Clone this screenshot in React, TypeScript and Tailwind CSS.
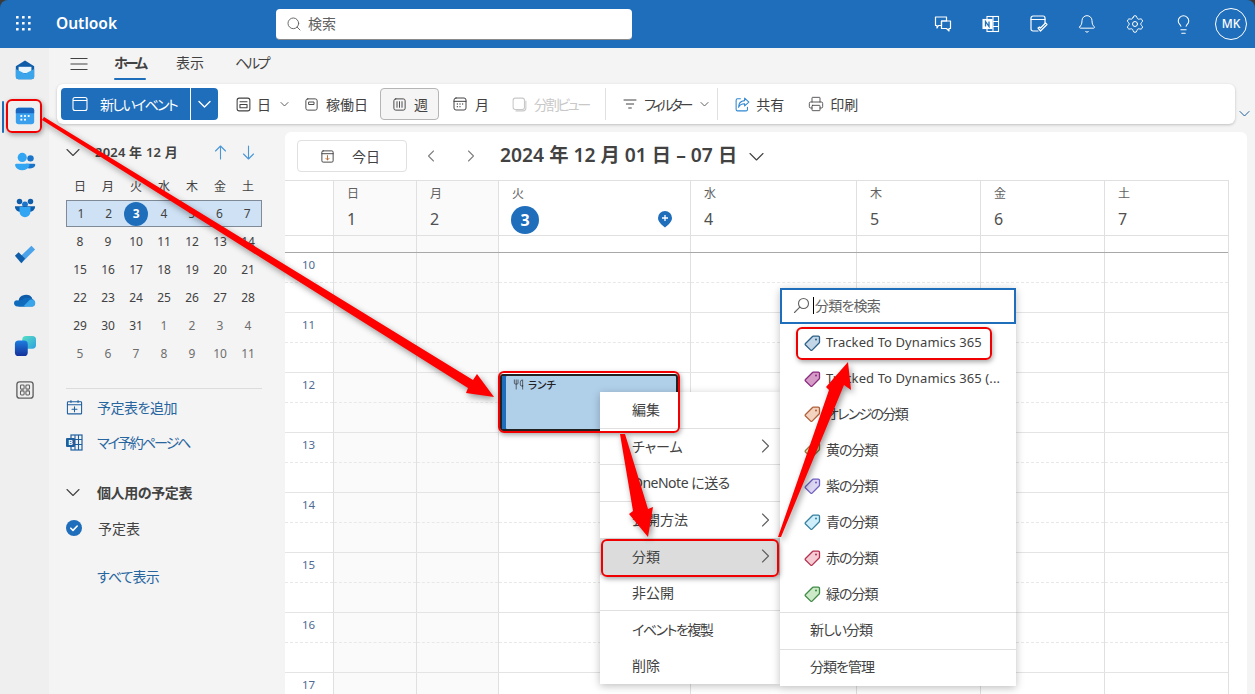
import React from "react";
import { Search, Bell, Settings, Lightbulb, Printer, Utensils } from "lucide-react";

const S = ({ children, size = 16, className = "", fill = "none" }: { children: React.ReactNode; size?: number; className?: string; fill?: string }) => (
  <svg width={size} height={size} viewBox="0 0 24 24" fill={fill} stroke="currentColor" strokeWidth={1.5} strokeLinecap="round" strokeLinejoin="round" className={"shrink-0 " + className}>
    {children}
  </svg>
);

const ChevD = ({ w = 14, sw = 1.1, className = "" }: { w?: number; sw?: number; className?: string }) => (
  <svg width={w} height={w / 2 + 2} viewBox={`0 0 ${w} ${w / 2 + 2}`} fill="none" stroke="currentColor" strokeWidth={sw} strokeLinecap="round" strokeLinejoin="round" className={"shrink-0 " + className}>
    <path d={`M1 1.500 ${w / 2} ${w / 2 + 0.5} ${w - 1} 1.500`} />
  </svg>
);

const ChevH = ({ dir, h = 14, className = "" }: { dir: "l" | "r"; h?: number; className?: string }) => (
  <svg width={h / 2 + 2} height={h} viewBox={`0 0 ${h / 2 + 2} ${h}`} fill="none" stroke="currentColor" strokeWidth="1.100" strokeLinecap="round" strokeLinejoin="round" className={"shrink-0 " + className}>
    <path d={dir === "r" ? `M1.500 1 ${h / 2 + 0.5} ${h / 2} 1.500 ${h - 1}` : `M${h / 2 + 0.5} 1 1.500 ${h / 2} ${h / 2 + 0.5} ${h - 1}`} />
  </svg>
);

const RailIcons = [
  <svg key="o" width="22" height="22" viewBox="0 0 24 24">
    <path d="M12 1.500 22 8v11a3 3 0 0 1-3 3H5a3 3 0 0 1-3-3V8z" fill="#0f5ca8" />
    <path d="M5 8.500h14v7H5z" fill="#eaf5fc" />
    <path d="M2 11l10 5 10-5v8a3 3 0 0 1-3 3H5a3 3 0 0 1-3-3z" fill="#3ba5ec" />
  </svg>,
  <svg key="c" width="22" height="22" viewBox="0 0 24 24">
    <rect x="2" y="3" width="20" height="18" rx="3" fill="#3aa0ee" />
    <path d="M2 9V6a3 3 0 0 1 3-3h14a3 3 0 0 1 3 3v3z" fill="#1a67c1" />
    <g fill="#fff"><rect x="7" y="11" width="2" height="2" /><rect x="11" y="11" width="2" height="2" /><rect x="15" y="11" width="2" height="2" /><rect x="7" y="15" width="2" height="2" /><rect x="11" y="15" width="2" height="2" /></g>
  </svg>,
  <svg key="p" width="22" height="22" viewBox="0 0 24 24">
    <circle cx="18" cy="8" r="3.500" fill="#1a74c9" />
    <path d="M13 14h9c1 0 1.500.8 1 2-1 2-3 3-6 3s-4-1-5-3z" fill="#1a74c9" />
    <circle cx="9" cy="7" r="5" fill="#33a6f3" />
    <path d="M2.500 14h13c1 0 1.700 1 1.200 2-1 3-4 5-7.700 5S2.200 19 1.300 16c-.3-1 .2-2 1.200-2z" fill="#33a6f3" />
  </svg>,
  <svg key="t" width="22" height="22" viewBox="0 0 24 24">
    <circle cx="6" cy="5" r="3" fill="#0f5ca8" />
    <circle cx="18" cy="5" r="3" fill="#0f5ca8" />
    <circle cx="12" cy="8" r="3.200" fill="#1a74c9" />
    <path d="M1 10h22c0 4-3 6-6 6H7c-3 0-6-2-6-6z" fill="#0f5ca8" />
    <path d="M6 11h12v5a6 6 0 0 1-12 0z" fill="#33a6f3" />
  </svg>,
  <svg key="d" width="22" height="22" viewBox="0 0 24 24">
    <path d="M8 13.500 19 3l4 4-15 15z" fill="#4ba3ea" />
    <path d="M1 14l4-4 7 7-4 5z" fill="#0f5ca8" />
  </svg>,
  <svg key="od" width="22" height="22" viewBox="0 0 24 24">
    <path d="M5 13a8 7 0 0 1 15-3l-8 9H5z" fill="#0f5ca8" />
    <path d="M9 12a5 5 0 0 1 6-2c1-.3 5-.3 7 2.500 2 3 .5 6.500-2 6.500H4c-3 0-4-2-4-3.500C0 13.500 2 12 4 12.500z" fill="#0f6cbd" />
    <path d="M10 19l7-7c2-1 4-.5 5.500 1 1.500 2.500 .5 6-2.500 6z" fill="#3ba5ec" />
  </svg>,
  <svg key="cp" width="22" height="22" viewBox="0 0 24 24">
    <defs>
      <linearGradient id="cpa" x1="0" y1="0" x2="1" y2="1"><stop offset="0" stopColor="#57e0c4" /><stop offset="1" stopColor="#2f9fe0" /></linearGradient>
      <linearGradient id="cpb" x1="0" y1="0" x2="0" y2="1"><stop offset="0" stopColor="#1d7ee0" /><stop offset="1" stopColor="#14309a" /></linearGradient>
    </defs>
    <rect x="9" y="1" width="15" height="14" rx="4" fill="url(#cpa)" />
    <rect x="1" y="6" width="14" height="17" rx="4" fill="url(#cpb)" />
  </svg>,
  <svg key="a" width="18" height="18" viewBox="0 0 20 20" fill="none" stroke="#616161" strokeWidth="1.200" className="-mt-[4px]">
    <rect x="1" y="1" width="18" height="18" rx="3" strokeWidth="1.500" />
    <rect x="5" y="4.500" width="4" height="4.500" rx="1" /><rect x="11" y="4.500" width="4" height="4.500" rx="1" />
    <rect x="5" y="11" width="4" height="4.500" rx="1" /><rect x="11" y="11" width="4" height="4.500" rx="1" />
  </svg>,
];

const Tag = ({ stroke, fill }: { stroke: string; fill: string }) => (
  <svg width="17" height="17" viewBox="0 0 17 17" className="shrink-0">
    <path d="M1.500 9.500 8.500 2.500a1 1 0 0 1 .8-.4h5a1.200 1.200 0 0 1 1.200 1.200v5a1 1 0 0 1-.4.8l-7 7a1 1 0 0 1-1.400 0L1.500 11a1 1 0 0 1 0-1.500z" fill={fill} stroke={stroke} strokeWidth="1.300" />
    <circle cx="12" cy="5.500" r="1" fill={stroke} />
  </svg>
);

const RibbonItem = ({ icon, label, className = "", labelClass = "", chevron }: { icon: React.ReactNode; label: string; className?: string; labelClass?: string; chevron?: boolean }) => (
  <div className={"flex h-8 shrink-0 items-center whitespace-nowrap text-[14px] " + className}>
    {icon}
    <span className={labelClass}>{label}</span>
    {chevron && <ChevD w={9} sw={1} className="ml-[4px] text-[#616161]" />}
  </div>
);

const weeks: [string, boolean][][] = [
  [["1", false], ["2", false], ["3", false], ["4", false], ["5", false], ["6", false], ["7", false]],
  [["8", false], ["9", false], ["10", false], ["11", false], ["12", false], ["13", false], ["14", false]],
  [["15", false], ["16", false], ["17", false], ["18", false], ["19", false], ["20", false], ["21", false]],
  [["22", false], ["23", false], ["24", false], ["25", false], ["26", false], ["27", false], ["28", false]],
  [["29", false], ["30", false], ["31", false], ["1", true], ["2", true], ["3", true], ["4", true]],
  [["5", true], ["6", true], ["7", true], ["8", true], ["9", true], ["10", true], ["11", true]],
];
const dayNames = ["日", "月", "火", "水", "木", "金", "土"];
const colTemplate = "grid grid-cols-[48px_83px_82px_192px_166px_124px_124px_124px]";

const Outline = ({ className }: { className: string }) => (
  <div className={"pointer-events-none absolute rounded-md border-2 border-[#f00000] shadow-[1px_2px_5px_rgba(0,0,0,0.35)] " + className} />
);

const menuItems: { t: string; chev?: boolean; line?: boolean; sel?: boolean; cls?: string }[] = [
  { t: "編集", line: true },
  { t: "チャーム", chev: true, line: true },
  { t: "OneNote に送る", line: true, cls: "tracking-[-0.5px]" },
  { t: "公開方法", chev: true },
  { t: "分類", chev: true, sel: true },
  { t: "非公開", line: true },
  { t: "イベントを複製", cls: "tracking-[-1.500px]" },
  { t: "削除" },
];

const cats: [string, string, string, string, string][] = [
  ["Tracked To Dynamics 365", "#2b5f86", "#c2d6e8", "text-[13px] tracking-[0.1px]", "pt-[1px]"],
  ["Tracked To Dynamics 365 (...", "#8a2a7d", "#d69cc8", "text-[13px] tracking-[0.1px]", "pt-[1px]"],
  ["オレンジの分類", "#b0603a", "#f3d3c0", "tracking-[-1.700px]", "pb-[2px]"],
  ["黄の分類", "#8f7a3c", "#f6ecc0", "tracking-[-1px]", "pb-[2px]"],
  ["紫の分類", "#6f5fc0", "#dcd6f3", "tracking-[-1px]", "pb-[2px]"],
  ["青の分類", "#357f9e", "#cdeefa", "tracking-[-1px]", "pb-[2px]"],
  ["赤の分類", "#b5304f", "#f6ccd4", "tracking-[-1px]", "pb-[2px]"],
  ["緑の分類", "#3f8a45", "#cdeac8", "tracking-[-1px]", "pb-[2px]"],
];

export default function App() {
  return (
    <div className="relative flex h-[694px] w-[1255px] flex-col overflow-hidden bg-[#3a3a3a] text-[#424242] [font-family:'Noto_Sans','Noto_Sans_CJK_JP',sans-serif] [font-feature-settings:'palt']">
      {/* Header */}
      <header className="flex h-12 shrink-0 items-center rounded-t-[8px] bg-[#1f6ebb] text-white">
        <div className="flex w-12 justify-center">
          <svg width="16" height="16" viewBox="0 0 16 16" fill="#fff">
            {[1, 7, 13].flatMap((y) => [1, 7, 13].map((x) => <rect key={x + "-" + y} x={x - 1} y={y - 1} width="2.600" height="2.600" rx=".5" />))}
          </svg>
        </div>
        <span className="ml-[8px] w-[220px] text-[15.500px] font-semibold">Outlook</span>
        <div className="flex h-[31px] w-[356px] items-center gap-[6px] rounded-[4px] border-b border-[#8a8a8a] bg-white pl-[10px] text-[14px] text-[#616161]">
          <Search size={16} strokeWidth={1.4} />
          <span>検索</span>
        </div>
        <div className="ml-auto flex items-center">
          <div className="flex w-12 justify-center">
            <svg width="18" height="18" viewBox="0 0 18 18" fill="none" stroke="#fff" strokeWidth="1.200" strokeLinejoin="round">
              <path d="M1.500 2h11v4H7.500v4.500H4.500L3 13V10.500H1.500z" />
              <path d="M7.500 6h9v7.500h-1.500V16l-2.500-2.500h-5z" />
            </svg>
          </div>
          <div className="flex w-12 justify-center">
            <svg width="18" height="18" viewBox="0 0 18 18" fill="none" stroke="#fff" strokeWidth="1.100">
              <rect x="5" y="1.500" width="11.500" height="15" />
              <path d="M11 1.500v15M11 6.500h5.500M11 11.500h5.500" />
              <rect x="1" y="4.500" width="9" height="9" fill="#fff" />
              <path d="M3.500 11.500v-5l3.500 5v-5" stroke="#1f6ebb" strokeWidth="1.300" />
            </svg>
          </div>
          <div className="flex w-12 justify-center">
            <svg width="18" height="18" viewBox="0 0 18 18" fill="none" stroke="#fff" strokeWidth="1.200" strokeLinecap="round" strokeLinejoin="round">
              <path d="M8 16H3a2 2 0 0 1-2-2V3a2 2 0 0 1 2-2h10a2 2 0 0 1 2 2v5" />
              <path d="M1 4.500h14" />
              <path d="M8 13l2.500 3 6.500-6.500-1.500-1.500-5 5-1-1z" />
            </svg>
          </div>
          <div className="flex w-12 justify-center"><Bell size={20} strokeWidth={1.2} /></div>
          <div className="flex w-12 justify-center"><Settings size={20} strokeWidth={1.2} /></div>
          <div className="flex w-12 justify-center"><Lightbulb size={21} strokeWidth={1.2} /></div>
          <div className="flex w-12 justify-center">
            <div className="flex h-8 w-8 items-center justify-center rounded-full border border-white text-[12px] font-medium">MK</div>
          </div>
        </div>
      </header>

      <div className="flex min-h-0 flex-1 bg-[#f4f4f4]">
        {/* Rail */}
        <nav className="relative flex w-[49px] shrink-0 flex-col items-center gap-[24px] bg-[#efefef] pt-[11px]">
          {RailIcons.map((ic, i) => (
            <div key={i} className="flex h-[22px] items-center justify-center">{ic}</div>
          ))}
          <div className="absolute left-[2px] top-[53px] h-8 w-[2px] rounded bg-[#1f6ebb]" />
        </nav>

        {/* Main */}
        <div className="flex min-w-0 flex-1 flex-col">
          {/* Tabs */}
          <div className="flex h-9 shrink-0 items-start pt-[2px] text-[14px]">
            <div className="ml-[21px] flex h-7 w-[18px] items-center justify-center text-[#424242]">
              <svg width="18" height="14" viewBox="0 0 18 14" stroke="currentColor" strokeWidth="1.200"><path d="M0.500 1.500h17M0.500 7h17M0.500 12.500h17" /></svg>
            </div>
            <div className="ml-[26px] flex h-[30px] w-[32px] flex-col items-start justify-between pt-[3px]">
              <span className="whitespace-nowrap font-semibold leading-5 tracking-[-3px]">ホーム</span>
              <span className="h-[2.500px] w-full rounded bg-[#1f6ebb]" />
            </div>
            <span className="ml-[30px] pt-[3px] leading-5">表示</span>
            <span className="ml-[31px] pt-[3px] leading-5 tracking-[-2.300px]">ヘルプ</span>
          </div>

          {/* Ribbon */}
          <div className="flex h-10 shrink-0 items-end">
            <div className="ml-2 flex h-10 w-[1178px] items-center rounded-md bg-white pl-1 shadow-[0_1px_3px_rgba(0,0,0,0.22)]">
              <div className="flex h-8 w-[157px] shrink-0 overflow-hidden rounded bg-[#1f6ebb] text-white">
                <div className="flex w-[130px] items-center gap-[12px] border-r border-white pl-[11px] text-[14px]">
                  <svg width="16" height="16" viewBox="0 0 16 16" fill="none" stroke="#fff" strokeWidth="1.100"><rect x="1" y="1.500" width="14" height="13" rx="2" /><path d="M1 4.500h14" /></svg>
                  <span className="whitespace-nowrap tracking-[-1.700px]">新しいイベント</span>
                </div>
                <div className="flex flex-1 items-center justify-center"><ChevD w={13} sw={1.4} /></div>
              </div>
              <RibbonItem className="ml-[17px] gap-[5px]" label="日" chevron icon={<S size={17}><rect x="3" y="3" width="18" height="18" rx="3" /><path d="M7 8h10M7 12h10v4.500H7z" /></S>} />
              <RibbonItem className="ml-[15px] gap-[7px]" label="稼働日" icon={<S size={15}><rect x="3" y="3" width="18" height="18" rx="3" /><path d="M8 8h8v4H8z" /></S>} />
              <RibbonItem className="ml-[12px] w-[59px] gap-[7px] rounded border border-[#b5b5b5] bg-[#f5f5f5] pl-[11px]" label="週" icon={<S size={15}><rect x="3" y="3" width="18" height="18" rx="3" /><path d="M8 7.500v9M12 7.500v9M16 7.500v9" /></S>} />
              <RibbonItem className="ml-[13px] gap-[7px]" label="月" icon={<S size={16}><rect x="3" y="3" width="18" height="18" rx="3" /><path d="M3 8h18" /><path d="M8 12h.01M12 12h.01M16 12h.01M8 16h.01M12 16h.01" strokeWidth="2" /></S>} />
              <RibbonItem className="ml-[22px] gap-[6px] text-[#c8c8c8]" labelClass="tracking-[-2.300px]" label="分割ビュー" icon={<S size={17}><rect x="3" y="3" width="16" height="16" rx="3" /><path d="M21 7v10a4 4 0 0 1-4 4H7" /></S>} />
              <div className="ml-[16px] h-8 w-px shrink-0 bg-[#e0e0e0]" />
              <RibbonItem className="ml-[16px] gap-[6px]" labelClass="tracking-[-3px]" label="フィルター" chevron icon={<S size={16}><path d="M3 6h18M6.500 12h11M10 18h4" /></S>} />
              <div className="ml-[8px] h-8 w-px shrink-0 bg-[#e0e0e0]" />
              <RibbonItem className="ml-[16px] gap-[5px]" label="共有" icon={<S size={17} className="text-[#2f86d0]"><path d="M9 4H5a2 2 0 0 0-2 2v13a2 2 0 0 0 2 2h12a2 2 0 0 0 2-2v-3" /><path d="M15 3l6 5.500-6 5.500v-3c-4 0-7 1.500-8.500 5 0-5.500 3-9 8.500-9.500z" /></S>} />
              <RibbonItem className="ml-[24px] gap-[6px]" label="印刷" icon={<Printer size={16} strokeWidth={1.3} />} />
            </div>
            <ChevD w={11} sw={1} className="mb-[7px] ml-[4px] text-[#1f5f9e]" />
          </div>

          {/* Content */}
          <div className="mt-2 flex min-h-0 flex-1">
            {/* Sidebar */}
            <aside className="w-[236px] shrink-0 pl-[17px]">
              <div className="flex h-[41px] w-[196px] items-center text-[13px]">
                <ChevD w={14} />
                <span className="ml-[15px] font-semibold tracking-[0.2px]">2024 年 12 月</span>
                <svg width="15" height="15" viewBox="0 0 15 15" fill="none" stroke="#4a97d8" strokeWidth="1.100" strokeLinecap="round" strokeLinejoin="round" className="ml-auto mr-[13px]"><path d="M7.500 14V1M2.500 6l5-5 5 5" /></svg>
                <svg width="15" height="15" viewBox="0 0 15 15" fill="none" stroke="#4a97d8" strokeWidth="1.100" strokeLinecap="round" strokeLinejoin="round" className="mr-[6px]"><path d="M7.500 1v13M2.500 9l5 5 5-5" /></svg>
              </div>
              <div className="grid w-[196px] grid-cols-7 text-center text-[12px]">
                {dayNames.map((d) => (
                  <div key={d} className="flex h-[27px] items-center justify-center">{d}</div>
                ))}
              </div>
              <div className="w-[196px] text-[12px]">
                {weeks.map((w, i) => (
                  <div key={i} className={"grid grid-cols-7 " + (i === 0 ? "mb-px h-[27px] border border-[#7f8a96] bg-[#cfe2f5]" : "h-7")}>
                    {w.map(([d, other], j) => (
                      <div key={j} className={"flex items-center justify-center " + (other ? "text-[#6e6e6e]" : "")}>
                        {i === 0 && d === "3" ? (
                          <span className="flex h-6 w-6 items-center justify-center rounded-full bg-[#1f6ebb] font-bold text-white">3</span>
                        ) : (
                          d
                        )}
                      </div>
                    ))}
                  </div>
                ))}
              </div>
              <div className="mt-[20px] h-px w-[196px] bg-[#dcdcdc]" />
              <div className="flex h-9 items-center text-[14px] text-[#27659f]">
                <S size={17} className="text-[#1f5f9e]"><rect x="2" y="4" width="20" height="17" rx="1" /><path d="M2 8h20M7 2v3M17 2v3M12 11v7M8.500 14.500h7" /></S>
                <span className="ml-[14px] tracking-[-0.500px]">予定表を追加</span>
              </div>
              <div className="flex h-[35px] items-center text-[14px] text-[#27659f]">
                <svg width="17" height="17" viewBox="0 0 17 17" className="shrink-0">
                  <rect x="5" y="1" width="11" height="15" fill="none" stroke="#1f5f9e" strokeWidth="1.200" />
                  <path d="M9 1v15M12.500 1v15M5 5.500h11M5 10.500h11" stroke="#1f5f9e" strokeWidth="1.100" />
                  <rect x="0" y="4" width="9" height="9" rx="1" fill="#1f5f9e" />
                  <text x="2.200" y="11" fontSize="7" fontWeight="700" fill="#fff">B</text>
                </svg>
                <span className="ml-[14px] tracking-[-2px]">マイ予約ページへ</span>
              </div>
              <div className="mt-[14px] flex h-9 items-center text-[14px]">
                <ChevD w={14} />
                <span className="ml-[17px] font-bold tracking-[-0.400px]">個人用の予定表</span>
              </div>
              <div className="flex h-9 items-center text-[14px]">
                <svg width="16" height="16" viewBox="0 0 16 16" className="shrink-0"><circle cx="8" cy="8" r="8" fill="#1f6ebb" /><path d="M4.800 8.200l2.200 2.200 4.200-4.400" fill="none" stroke="#fff" strokeWidth="1.600" strokeLinecap="round" strokeLinejoin="round" /></svg>
                <span className="ml-[16px]">予定表</span>
              </div>
              <div className="mt-3 flex h-9 items-center pl-[31px] text-[14px] tracking-[-0.900px] text-[#27659f]">すべて表示</div>
            </aside>

            {/* Calendar panel */}
            <section className="flex h-full w-[962px] shrink-0 flex-col overflow-hidden rounded-t-md bg-white">
              <div className="flex h-12 shrink-0 items-start pl-3 pt-2">
                <div className="flex h-8 w-[110px] items-center gap-[17px] rounded border border-[#e0e0e0] pl-[22px] text-[14px]">
                  <S size={15}><rect x="3" y="3" width="18" height="18" rx="2" /><path d="M3 7.500h18" /><path d="M12 10.500v7M9.500 15l2.500 2.500 2.500-2.500" stroke="#b8682e" /></S>
                  <span>今日</span>
                </div>
                <ChevH dir="l" h={12} className="ml-[20px] mt-[10px] text-[#808080]" />
                <ChevH dir="r" h={12} className="ml-[32px] mt-[10px] text-[#808080]" />
                <span className="ml-[25px] mt-[1px] whitespace-nowrap text-[19.300px] font-semibold leading-7">2024 年 12 月 01 日 – 07 日</span>
                <ChevD w={15} className="ml-[12px] mt-[12px] text-[#424242]" />
              </div>

              <div className="mr-[18px] min-h-0 flex-1 overflow-hidden border-r border-[#e0e0e0]">
                <div className={colTemplate + " h-[56px] border-b border-t border-[#e0e0e0]"}>
                  <div />
                  {dayNames.map((d, i) => {
                    const nums = [1, 2, 3, 4, 5, 6, 7];
                    return (
                      <div key={d} className={"relative border-l border-[#e0e0e0] pl-[13px] " + (i < 2 ? "bg-[#fafafa]" : "")}>
                        <div className="mt-[4px] text-[12px] leading-[18px] text-[#616161]">{d}</div>
                        {i === 2 ? (
                          <>
                            <span className="mt-[3px] flex h-7 w-7 -translate-x-px items-center justify-center rounded-full bg-[#1f6ebb] text-[16px] font-bold text-white">3</span>
                            <svg width="14" height="17" viewBox="0 0 14 17" className="absolute left-[159px] top-[30px]">
                              <path d="M7 16.500C4 14 0 11 0 7a7 7 0 0 1 14 0c0 4-4 7-7 9.500z" fill="#1f6ebb" />
                              <path d="M7 4v6M4 7h6" stroke="#fff" strokeWidth="1.300" />
                            </svg>
                          </>
                        ) : (
                          <div className="mt-[4px] text-[16px] leading-6 text-[#505050]">{nums[i]}</div>
                        )}
                      </div>
                    );
                  })}
                </div>
                <div className={colTemplate + " h-[17px] border-b border-[#a8a8a8]"}>
                  <div />
                  {dayNames.map((d, i) => (
                    <div key={d} className={"border-l border-[#e0e0e0] " + (i < 2 ? "bg-[#fafafa]" : "")} />
                  ))}
                </div>
                {[10, 11, 12, 13, 14, 15, 16, 17].map((h) => (
                  <div key={h} className={colTemplate + " h-[60px] border-b border-[#e4e4e4]"}>
                    <div className="relative">
                      <span className="block pl-[17px] pt-[4px] text-[11.500px] leading-4 text-[#4f6b93]">{h}</span>
                      <div className="absolute left-0 right-0 top-[29px] border-t border-dashed border-[#e8e8e8]" />
                    </div>
                    {dayNames.map((d, i) => (
                      <div key={d} className={"relative border-l border-[#e0e0e0] " + (i < 2 ? "bg-[#fafafa]" : "")}>
                        <div className="absolute left-0 right-0 top-[29px] border-t border-dashed border-[#e8e8e8]" />
                        {h === 12 && i === 2 && (
                          <div className="absolute left-[1px] top-[1px] flex h-[57px] w-[178px] items-start gap-[4px] rounded-[3px] border-2 border-[#222] bg-[#b0cfe9] pl-[11px] text-[10.500px] font-medium leading-4 text-[#222] shadow-[inset_4px_0_0_#1f6ebb]">
                            <Utensils size={11} strokeWidth={1.4} className="mt-[3px]" />
                            <span className="mt-[1px]">ランチ</span>
                          </div>
                        )}
                      </div>
                    ))}
                  </div>
                ))}
              </div>
            </section>
          </div>
        </div>
      </div>

      {/* Context menu */}
      <div className="absolute left-[600px] top-[392px] w-[180px] bg-white text-[14px] shadow-[0_2px_8px_rgba(0,0,0,0.25)]">
        {menuItems.map((m) => (
          <div key={m.t} className={"flex h-[36.500px] items-center pl-[32px] pr-[10px] " + (m.line ? "border-b border-[#e0e0e0] " : "") + (m.sel ? "bg-[#dcdcdc]" : "")}>
            <span className={"whitespace-nowrap " + (m.cls ?? "")}>{m.t}</span>
            {m.chev && <ChevH dir="r" h={14} className="ml-auto text-[#616161]" />}
          </div>
        ))}
      </div>

      {/* Sub menu */}
      <div className="absolute left-[780px] top-[288px] w-[236px] bg-white text-[14px] shadow-[0_2px_8px_rgba(0,0,0,0.25)]">
        <div className="flex h-9 items-center border-2 border-[#1f6ebb] pb-[2px] pl-[11px] text-[#616161]">
          <svg width="17" height="17" viewBox="0 0 17 17" fill="none" stroke="#616161" strokeWidth="1.100" className="shrink-0"><circle cx="10.500" cy="6.500" r="5" /><path d="M6.800 10.200 1.500 15.500" strokeLinecap="round" /></svg>
          <span className="ml-[3px] h-[17px] w-px bg-black" />
          <span className="ml-px tracking-[-0.800px]">分類を検索</span>
        </div>
        {cats.map(([t, st, f, cls, pad]) => (
          <div key={t} className={"flex h-9 items-center gap-[5px] pl-[24px] " + pad}>
            <Tag stroke={st} fill={f} />
            <span className={"whitespace-nowrap " + cls}>{t}</span>
          </div>
        ))}
        <div className="flex h-[37px] items-center border-t border-[#e0e0e0] pb-[3px] pl-[30px] tracking-[-1px]">新しい分類</div>
        <div className="flex h-[37px] items-center border-t border-[#e0e0e0] pb-[3px] pl-[30px] tracking-[-1px]">分類を管理</div>
      </div>

      {/* Annotations */}
      <Outline className="left-[6px] top-[99px] h-[34px] w-[36px]" />
      <Outline className="left-[498px] top-[371px] h-[62px] w-[182px]" />
      <Outline className="left-[601px] top-[539px] h-[38px] w-[178px]" />
      <Outline className="left-[796px] top-[327px] h-[33px] w-[196px]" />
      <svg width="1255" height="694" viewBox="0 0 1255 694" className="pointer-events-none absolute inset-0 drop-shadow-[2px_3px_3px_rgba(0,0,0,0.4)]">
        <polygon points="44,117 473,380 477,374 494,397 466,393 468,388 42,120" fill="#fe0000" />
        <polygon points="620,434 633,511 629,514 648,537 653,507 648,509 625,434" fill="#fe0000" />
        <polygon points="778,537 829,390 826,387 848,362 851,390 844,385 781,537" fill="#fe0000" />
      </svg>
    </div>
  );
}
